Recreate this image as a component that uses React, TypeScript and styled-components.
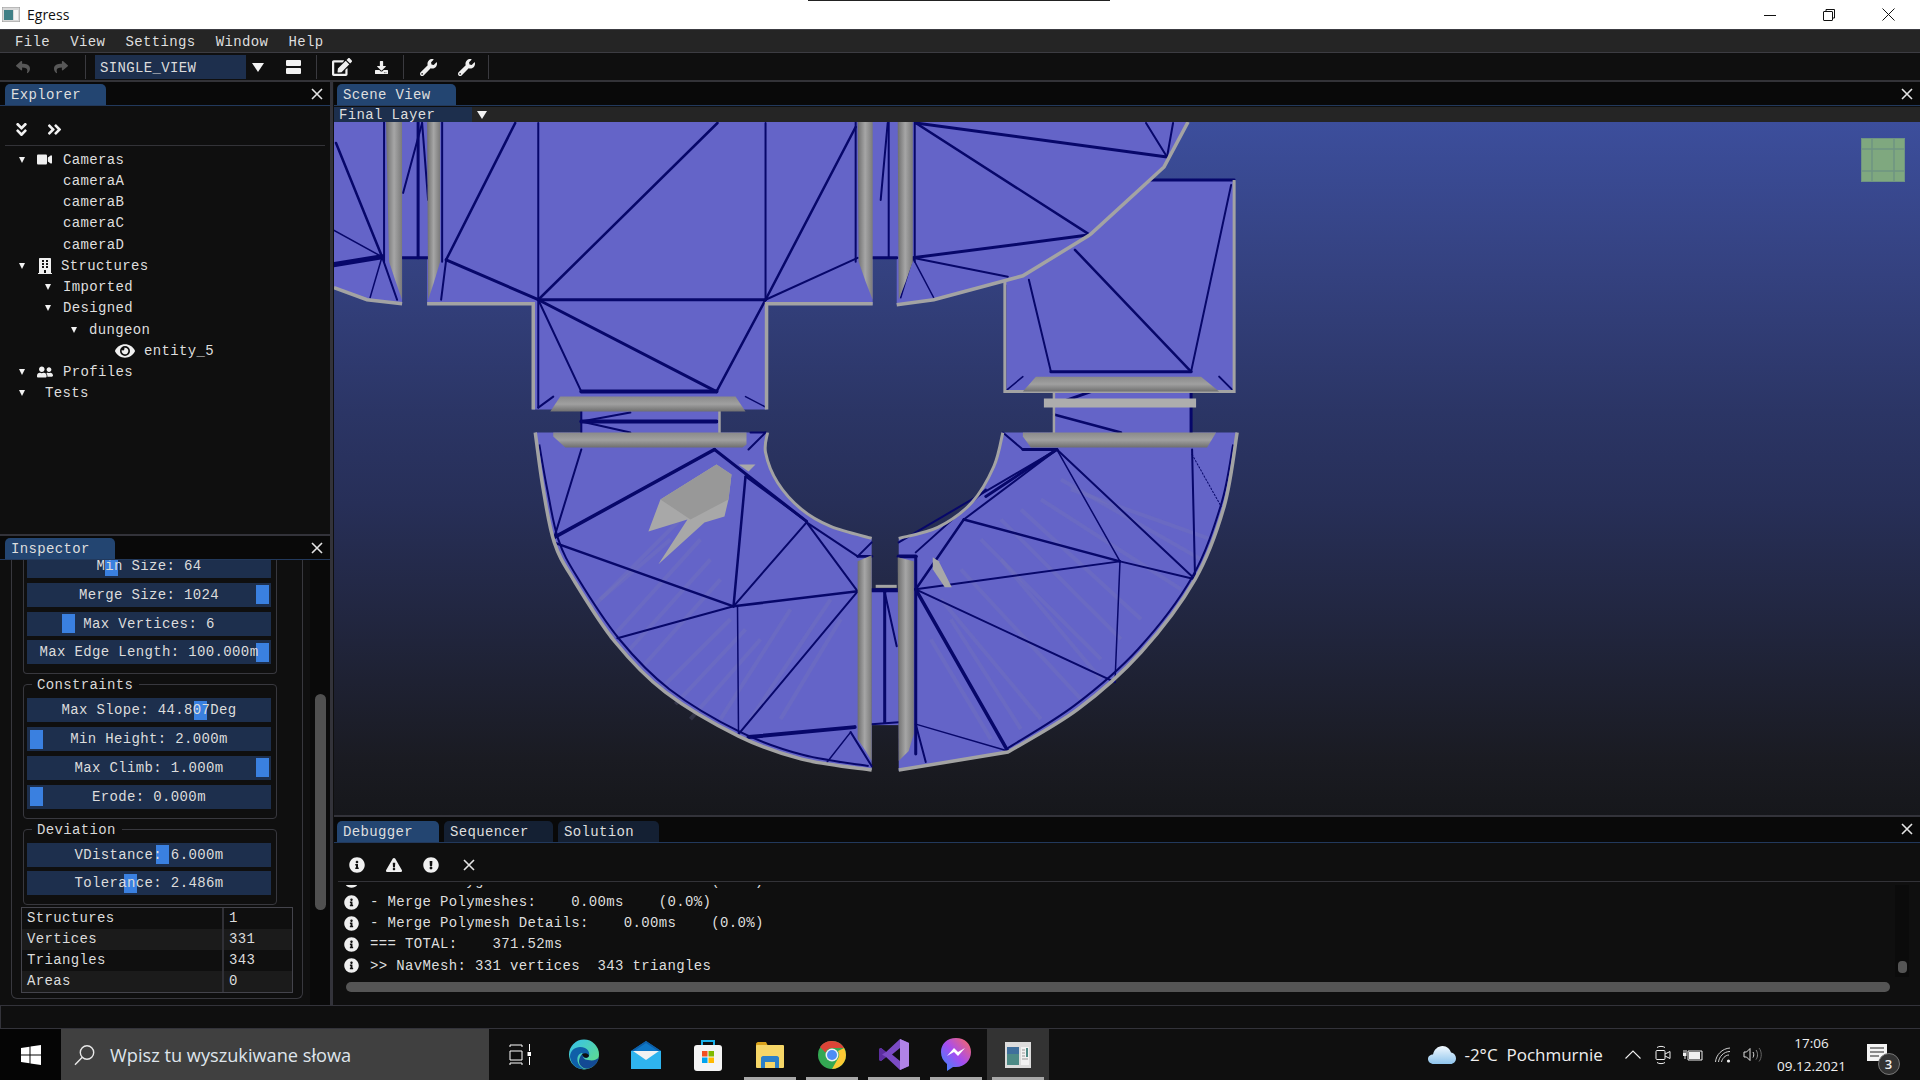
import React from "react";
import styled, { createGlobalStyle } from "styled-components";
import {
  FaVideo, FaBuilding, FaUserFriends, FaEye, FaAngleDoubleDown, FaAngleDoubleRight,
  FaReply, FaShare, FaEdit, FaDownload, FaWrench, FaInfoCircle,
  FaExclamationTriangle, FaExclamationCircle,
} from "react-icons/fa";

const MONO = `"Liberation Mono", "DejaVu Sans Mono", monospace`;
const SANS = `"Open Sans", "Noto Sans", sans-serif`;

const Global = createGlobalStyle`
  html, body { margin: 0; padding: 0; background: #0f0f0f; }
  * { box-sizing: border-box; }
  #root { width: 1920px; height: 1080px; overflow: hidden; }
`;

const Page = styled.div`
  position: relative; width: 1920px; height: 1080px; display: flex; flex-direction: column;
  font-family: ${MONO}; font-size: 14px; letter-spacing: 0.35px; color: #dedede; overflow: hidden;
  background: #0f0f0f;
`;
const TitleBar = styled.div`
  height: 29px; flex: none; background: #fff; display: flex; align-items: center; padding-left: 2px;
  font-family: ${SANS}; font-size: 14px; letter-spacing: 0; color: #111;
`;
const TitleText = styled.span` margin-left: 7px; `;
const TopMark = styled.div`
  position: absolute; left: 808px; top: 0; width: 302px; height: 1px; background: #222;
`;
const WindowButtons = styled.div` margin-left: auto; display: flex; height: 29px; `;
const WindowButton = styled.div`
  width: 58px; display: flex; align-items: center; justify-content: center; margin-right: 1px;
  &:last-child { margin-right: 3px; }
`;
const MenuBar = styled.div`
  height: 24px; flex: none; background: #252525; border-top: 1px solid #3c3c42; border-bottom: 1px solid #3c3c42;
  display: flex; align-items: center; gap: 20.25px; padding: 2px 0 0 15px;
`;
const ToolBar = styled.div`
  height: 29px; flex: none; background: #0f0f0f; border-bottom: 2px solid #333338; display: flex; align-items: center;
  color: #fff; padding-top: 1px;
`;
const ToolIcon = styled.div<{ $w: number; $dim?: boolean; $size?: number }>`
  width: ${(p) => p.$w}px; height: 22px; flex: none; display: flex; align-items: center; justify-content: center;
  color: ${(p) => (p.$dim ? "#585858" : "#f0f0f0")}; font-size: ${(p) => p.$size ?? 17}px;
`;
const ToolSep = styled.div<{ $ml?: number }>`
  width: 1px; height: 24px; background: #3a3a3f; flex: none; margin-left: ${(p) => p.$ml ?? 0}px;
`;
const Combo = styled.div`
  width: 151px; height: 24px; flex: none; margin-left: 9px; background: #1d2f4d; padding-left: 5px; line-height: 26px; color: #dcdcdc;
`;
const Arrow = styled.span<{ $size: number }>`
  display: inline-block; width: 0; height: 0; flex: none;
  border-left: ${(p) => p.$size}px solid transparent; border-right: ${(p) => p.$size}px solid transparent;
  border-top: ${(p) => p.$size * 1.6}px solid #f2f2f2;
`;
const Main = styled.div` flex: none; height: 923px; display: flex; `;
const LeftColumn = styled.div`
  width: 333px; flex: none; display: flex; flex-direction: column; border-right: 3px solid #33333a;
`;
const RightColumn = styled.div` flex: 1; min-width: 0; display: flex; flex-direction: column; padding-left: 1px; `;
const TabHeader = styled.div<{ $h?: number; $pl?: number }>`
  height: ${(p) => p.$h ?? 24}px; flex: none; background: #090909; border-bottom: 1px solid #22395c; display: flex; align-items: flex-end;
  padding-left: ${(p) => p.$pl ?? 5}px; gap: 5px; position: relative;
`;
const Tab = styled.div<{ $w: number; $active?: boolean }>`
  width: ${(p) => p.$w}px; height: 21px; border-radius: 5px 5px 0 0; padding-left: 6px; line-height: 22px;
  background: ${(p) => (p.$active ? "#234571" : "#142033")};
`;
const CloseSlot = styled.div`
  position: absolute; right: 7px; top: 6px; line-height: 0;
`;
const ExplorerPanel = styled.div` height: 454px; flex: none; display: flex; flex-direction: column; border-bottom: 2px solid #33333a; `;
const ExplorerTools = styled.div`
  height: 40px; flex: none; margin: 0 5px; border-bottom: 1px solid #333338; display: flex; align-items: center; gap: 16px;
  padding: 7px 0 0 8px; color: #f2f2f2; font-size: 17px;
`;
const Tree = styled.div` padding-top: 3px; `;
const TreeRow = styled.div<{ $indent: number }>`
  height: 21.25px; display: flex; align-items: center; padding-left: ${(p) => p.$indent}px; white-space: nowrap;
`;
const TreeArrowSlot = styled.div` width: 18px; display: flex; flex: none; `;
const TreeIcon = styled.div<{ $w: number; $size: number }>`
  width: ${(p) => p.$w}px; flex: none; display: flex; align-items: center; font-size: ${(p) => p.$size}px; color: #f0f0f0;
`;
const InspectorPanel = styled.div` flex: 1; display: flex; flex-direction: column; position: relative; min-height: 0; `;
const InspectorScroll = styled.div` flex: 1; overflow: hidden; padding-left: 11px; min-height: 0; `;
const OuterBox = styled.div`
  width: 292px; margin-top: -6px; border: 1px solid #38383e; border-top: 0; border-radius: 0 0 6px 6px; padding: 0 0 5px 9px;
`;
const Group = styled.div<{ $first?: boolean }>`
  position: relative; width: 254px; margin: ${(p) => (p.$first ? "0" : "10px")} 0 0 2px;
  padding: ${(p) => (p.$first ? "0" : "13px")} 5px 9px 3px; border: 1px solid #38383e; border-top-width: ${(p) => (p.$first ? 0 : 1)}px;
  border-radius: ${(p) => (p.$first ? "0 0 4px 4px" : "4px")}; display: flex; flex-direction: column; gap: 4.75px;
`;
const GroupTitle = styled.div`
  position: absolute; left: 8px; top: -8px; background: #0f0f0f; padding: 0 6px 0 5px; line-height: 16px; color: #d8d8d8;
`;
const Slider = styled.div`
  position: relative; height: 24px; background: #1d2f4d; display: flex; align-items: center; justify-content: center;
  white-space: pre; color: #dcdcdc;
`;
const Grab = styled.div<{ $left: number }>`
  position: absolute; left: ${(p) => p.$left}px; top: 2.5px; width: 13px; height: 19px; background: #3a80e0;
`;
const SliderLabel = styled.span` position: relative; `;
const Table = styled.div`
  width: 272px; margin-top: 2px; border: 1px solid #44444c; display: flex; flex-direction: column;
`;
const TableRow = styled.div<{ $odd?: boolean }>`
  height: 21px; display: flex; background: ${(p) => (p.$odd ? "#1b1b1b" : "#0f0f0f")}; line-height: 21px; color: #dcdcdc;
`;
const TableName = styled.div` width: 202px; padding-left: 5px; border-right: 2px solid #303036; `;
const TableValue = styled.div` padding-left: 5px; `;
const VScrollTrack = styled.div`
  position: absolute; right: 0; top: 24px; bottom: 0; width: 20px; background: #0a0a0a;
`;
const VScrollThumb = styled.div`
  position: absolute; left: 5px; top: 134px; width: 11px; height: 216px; border-radius: 6px; background: #505050;
`;
const ScenePanel = styled.div` height: 735px; flex: none; display: flex; flex-direction: column; border-bottom: 2px solid #33333a; `;
const LayerBar = styled.div`
  height: 15px; flex: none; margin-top: 1px; background: #252525; display: flex; align-items: center; line-height: 16px; overflow: hidden;
`;
const LayerCombo = styled.div` width: 138px; height: 15px; background: #1d2f4d; padding-left: 5px; margin-right: 5px; `;
const SceneViewport = styled.div`
  position: relative; flex: 1; min-height: 0; overflow: hidden;
  background: linear-gradient(180deg, #3c4e9c 0%, #34417f 22%, #2b3565 42%, #272f58 55%, #1a1b22 92%, #16171b 100%);
`;
const SceneSvg = styled.svg` display: block; width: 100%; height: 100%; `;
const Gizmo = styled.svg` position: absolute; right: 15px; top: 16px; `;
const DebugPanel = styled.div` flex: 1; display: flex; flex-direction: column; min-height: 0; position: relative; `;
const DebugTools = styled.div`
  height: 39px; flex: none; margin-left: 4px; border-bottom: 1px solid #333338; display: flex; align-items: center;
  padding: 5px 0 0 11px; gap: 21px; font-size: 16px; color: #f0f0f0;
  & > svg:last-child { margin-left: 3px; }
`;
const LogArea = styled.div` flex: 1; overflow: hidden; padding-left: 10px; margin-top: 3px; min-height: 0; position: relative; `;
const LogRow = styled.div<{ $top?: number }>`
  height: 21.2px; display: flex; align-items: center; white-space: pre; gap: 11px; color: #dedede;
  margin-top: ${(p) => p.$top ?? 0}px;
`;
const LogIcon = styled.div` font-size: 15px; line-height: 0; color: #efefef; flex: none; `;
const HScroll = styled.div`
  position: absolute; left: 12px; bottom: 13px; width: 1544px; height: 10px; border-radius: 5px; background: #555;
`;
const VScrollSmall = styled.div`
  position: absolute; right: 11px; top: 0; width: 14px; bottom: 28px; background: #0b0b0b;
  &::after {
    content: ""; position: absolute; left: 3px; bottom: 4px; width: 9px; height: 12px; border-radius: 4px; background: #555;
  }
`;
const StatusBar = styled.div`
  height: 24px; flex: none; background: #0f0f0f; border-top: 1px solid #33333a; border-bottom: 1px solid #33333a; border-left: 1px solid #33333a;
`;
const TaskBar = styled.div`
  height: 51px; flex: none; background: #0f0f0f; display: flex; align-items: stretch;
  font-family: ${SANS}; letter-spacing: 0; color: #f0f0f0;
`;
const StartButton = styled.div` width: 61px; background: #050505; display: flex; align-items: center; justify-content: center; `;
const SearchBox = styled.div`
  width: 428px; background: #404040; display: flex; align-items: center; padding-left: 13px; gap: 14px; font-size: 18.2px; color: #dfe5ec;
`;
const TaskItem = styled.div<{ $active?: boolean; $running?: boolean; $mr?: number }>`
  position: relative; width: 62px; display: flex; align-items: center; justify-content: center;
  margin-right: ${(p) => p.$mr ?? 0}px;
  background: ${(p) => (p.$active ? "#333" : "transparent")};
  &::after {
    content: ""; display: ${(p) => (p.$running ? "block" : "none")}; position: absolute; left: 5px; right: 5px; bottom: 0; height: 3px; background: #a8a8a8;
  }
`;
const Tray = styled.div` margin-left: auto; padding-right: 7.5px; display: flex; align-items: center; position: relative; `;
const TrayIcon = styled.div<{ $w: number }>` width: ${(p) => p.$w}px; display: flex; justify-content: center; align-items: center; `;
const Weather = styled.div` font-size: 17px; width: 158px; white-space: pre; `;
const Clock = styled.div`
  width: 88px; display: flex; flex-direction: column; align-items: center; font-size: 13.5px; line-height: 23px; margin-left: 0.5px;
`;
const Notify = styled.div` position: relative; width: 46px; height: 51px; margin-left: 11px; `;
const NotifyGlyph = styled.svg` position: absolute; left: 0; top: 15px; `;
const Badge = styled.div`
  position: absolute; left: 11px; top: 24px; width: 22px; height: 22px; border-radius: 50%; background: #333; border: 1px solid #777;
  font-size: 13px; font-weight: 600; text-align: center; line-height: 20px;
`;

const NAVY = "#07076a";
const PURPLE = "#6464c8";
const WALL = "#a3a3a3";

const smooth = (pts: number[][]) => {
  let d = `M${pts[0][0]} ${pts[0][1]}`;
  for (let i = 0; i < pts.length - 1; i++) {
    const p0 = pts[Math.max(i - 1, 0)], p1 = pts[i], p2 = pts[i + 1], p3 = pts[Math.min(i + 2, pts.length - 1)];
    d += `C${p1[0] + (p2[0] - p0[0]) / 6} ${p1[1] + (p2[1] - p0[1]) / 6} ${p2[0] - (p3[0] - p1[0]) / 6} ${p2[1] - (p3[1] - p1[1]) / 6} ${p2[0]} ${p2[1]}`;
  }
  return d;
};
const leftOuter = [[535,433],[543,490],[554,543],[573,580],[615,643],[665,693],[738,737],[801,760],[871,771]];
const leftInner = [[871,539],[830,527],[801,510],[777,483],[765,453],[767,433]];
const rightOuter = [[1007,753],[1077,710],[1140,653],[1194,580],[1223,507],[1236,433]];
const rightInner = [[1002,433],[993,467],[971,503],[937,528],[898,539]];
const joined = (a: number[][], b: number[][]) => `${smooth(a)}L${smooth(b).slice(1)}Z`;
const rightCurves = smooth(rightOuter).slice(smooth(rightOuter).indexOf("C"));

const meshLines: number[][] = [
  [538,300,765,300,3],[538,123,538,300,2],[765,123,765,300,2],[538,300,717,123,2.5],[765,300,855,127,2.5],
  [765,300,857,258,2],[538,300,446,260,3],[446,260,515,123,2.5],[336,143,382,257,2.5],[333,230,382,257,1.5],
  [333,265,382,257,5],[382,257,370,298,1.5],[382,257,397,300,2],[418,122,418,258,3],[403,193,422,123,2],[422,123,428,200,2],
  [398,258,432,258,3],[446,260,441,300,2],[888,122,888,258,2],[880,200,887,123,2],[872,258,896,258,3],
  [384,122,384,262,2],[442,122,442,262,2],[855,122,855,262,2],[914,122,914,262,2],
  [915,123,1089,235,2.5],[912,258,1089,235,3],[912,258,1007,277,2],[912,258,933,298,1.5],[912,258,900,298,1.5],
  [915,123,1166,157,3],[1145,123,1166,157,2],[1172,123,1166,157,2],
  [538,300,581,392,2],[538,300,716,392,3],[765,300,716,392,2.5],[581,392,716,392,4],[538,300,538,408,2],[538,408,553,397,2],[766,408,745,397,1.5],
  [581,422,716,422,4],[581,422,630,413,2],[581,422,630,433,2],[581,410,581,433,2],
  [1074,250,1190,372,2.5],[1028,280,1050,372,2],[1050,372,1190,372,3],[1190,372,1230,185,2],[1150,180,1233,180,3],
  [1004,392,1022,377,1.5],[1233,392,1218,377,2],[1053,392,1053,433,2],[1190,392,1190,433,3],[1053,415,1120,433,2.5],[1053,405,1090,392,3],
  [714,450,554,538,3.5],[554,538,581,450,2],[556,544,733,607,2.5],[733,607,857,592,2.5],[617,639,733,607,2],[733,607,745,477,2.5],
  [714,450,806,522,3],[745,477,806,522,2],[733,607,806,523,2],[806,523,857,592,2],[738,735,737,607,1.5],[738,735,857,592,2],
  [748,738,854,728,4],[850,733,825,765,1.5],[850,733,871,767,2],[857,557,871,557,3],[857,557,806,523,2],[871,543,857,557,2],
  [750,433,765,433,2],[748,450,765,433,2],
  [884,593,884,723,3],[884,593,896,647,2],[871,591,898,591,4],[871,725,898,723,2],
  [1056,450,1119,562,1.5],[1056,450,1194,580,2],[963,520,1119,562,2.5],[1119,562,1194,580,2],[915,590,1119,562,2],[1119,562,1114,683,1.5],
  [915,590,1114,683,2],[915,590,1007,752,3.5],[915,725,1007,752,1.5],[915,725,925,763,2],[963,520,915,590,2.5],[1191,450,1194,580,2],
  [1056,450,985,497,3],[1056,450,963,520,2],[898,543,1056,450,2],[915,553,985,490,2],[898,557,915,557,4],[915,557,915,755,3],
  [1002,433,1022,450,2],[1022,450,1056,450,3],
];

const streaks: number[][] = [
  [590,610,680,520],[610,640,700,540],[640,670,720,580],[660,690,730,620],[690,720,760,640],[720,720,790,610],[750,720,830,600],[780,720,840,620],
  [600,600,670,540],[625,655,710,560],[675,705,745,630],
  [1000,520,1120,640],[1020,510,1140,620],[1040,500,1180,590],[1060,480,1200,560],[960,570,1080,700],[940,600,1040,720],[930,640,990,740],[980,540,1100,660],
  [1070,490,1210,540],[1000,560,1100,680],[950,620,1020,730],
];

const Mesh = () => (
  <SceneSvg viewBox="334 122 1584 694" preserveAspectRatio="none">
    <defs>
      <linearGradient id="pillar" x1="0" x2="1" y1="0" y2="0">
        <stop offset="0" stopColor="#6e6e6e" /><stop offset="0.5" stopColor="#a6a6a6" /><stop offset="1" stopColor="#7a7a7a" />
      </linearGradient>
      <linearGradient id="door" x1="0" x2="0" y1="0" y2="1">
        <stop offset="0" stopColor="#8a8a8a" /><stop offset="0.5" stopColor="#a0a0a0" /><stop offset="1" stopColor="#6f6f6f" />
      </linearGradient>
    </defs>
    <g fill={PURPLE}>
      <polygon points="334,122 1187,122 1163,167 1089,235 1022,276 933,300 896,305 896,258 872,258 872,305 766,305 766,410 532,410 532,305 427,305 427,258 402,258 402,305 367,300 334,288" />
      <polygon points="1004,282 1022,276 1089,235 1150,180 1233,180 1233,392 1004,392" />
      <rect x="581" y="410" width="138" height="24" />
      <rect x="1053" y="392" width="137" height="42" />
      <path d={joined(leftOuter, leftInner)} />
      <path d={`${smooth(rightInner)}L898 772L1007 753${rightCurves}Z`} />
      <rect x="871" y="590" width="27" height="136" />
    </g>
    <g stroke="#8484b0" strokeOpacity="0.2" strokeWidth="4" fill="none">
      {streaks.map((s, i) => <line key={i} x1={s[0]} y1={s[1]} x2={s[2]} y2={s[3]} />)}
    </g>
    <g stroke={NAVY} strokeLinecap="round">
      {meshLines.map((l, i) => <line key={i} x1={l[0]} y1={l[1]} x2={l[2]} y2={l[3]} strokeWidth={l[4]} />)}
      <line x1="1191" y1="455" x2="1220" y2="507" strokeWidth="1" strokeDasharray="1.5 2" />
    </g>
    <g fill="none" stroke={NAVY} strokeWidth="2" strokeLinejoin="round">
      <path d={smooth([[539,445],[547,490],[558,540],[577,578],[619,640],[669,690],[740,733],[803,756],[868,767]])} />
      <path d={smooth([[1232,445],[1220,505],[1191,578],[1137,650],[1074,706],[1007,749]])} />
      <polyline points="1005,285 1005,392" strokeWidth="1" />
    </g>
    <g fill="none" stroke={WALL} strokeWidth="3.5" strokeLinejoin="miter">
      <polyline points="334,288 367,300 402,304" />
      <polyline points="427,304 533,304 533,410" />
      <polyline points="766,410 766,304 872,304" />
      <polyline points="896,305 933,300 1022,276 1089,235 1163,167 1187,122" />
      <polyline points="1233,180 1233,392 1004,392 1004,282" strokeWidth="3" />
      <path d={smooth(leftOuter)} />
      <path d={`M898 771L1007 753${rightCurves}`} />
      <path d={smooth(leftInner)} strokeWidth="3" />
      <path d={smooth(rightInner)} strokeWidth="3" />
      <line x1="1053" y1="392" x2="1053" y2="434" strokeWidth="2.5" />
      <line x1="719" y1="410" x2="719" y2="434" strokeWidth="2.5" />
      <line x1="875" y1="587" x2="896" y2="587" strokeWidth="3" />
    </g>
    <g fill="url(#pillar)">
      <path d="M386 122H402V300L395 280L389 262Z" />
      <path d="M427 122H440V262L434 282L428 300Z" />
      <path d="M857 122H872V300L865 282L858 262Z" />
      <path d="M897 122H912V262L905 282L898 300Z" />
      <path d="M857 562L871 556V762L865 752L857 740Z" />
      <path d="M897 558L913 562V735L908 752L898 762Z" />
    </g>
    <g fill="url(#door)">
      <polygon points="560,397 735,397 745,412 550,412" />
      <polygon points="553,433 746,433 746,445 742,448 565,448 553,437" />
      <polygon points="1035,377 1200,377 1218,392 1022,392" />
      <polygon points="1022,433 1215,433 1206,448 1030,448 1022,437" />
    </g>
    <polygon points="1043,399 1195,399 1195,408 1043,408" fill="#adadad" />
    <g fill="#a8a8a8">
      <polygon points="716,465 731,475 728,500 724,517 704,523 658,565 687,520 648,532 660,500" />
      <polygon points="932,558 938,562 951,588 944,588 932,570" />
      <polygon points="738,465 755,465 748,472" />
    </g>
    <polygon points="660,500 716,465 731,475 728,500 690,520" fill="#989898" />
  </SceneSvg>
);

const sliderGroups = [
  { title: "", rows: [["Min Size: 64", 78], ["Merge Size: 1024", 229], ["Max Vertices: 6", 35], ["Max Edge Length: 100.000m", 229]] },
  { title: "Constraints", rows: [["Max Slope: 44.807Deg", 166.7], ["Min Height: 2.000m", 3], ["Max Climb: 1.000m", 229], ["Erode: 0.000m", 3]] },
  { title: "Deviation", rows: [["VDistance: 6.000m", 129], ["Tolerance: 2.486m", 96.7]] },
] as { title: string; rows: [string, number][] }[];

const tree = [
  { indent: 19, label: "Cameras", icon: "camera", arrow: true },
  { indent: 63, label: "cameraA" }, { indent: 63, label: "cameraB" }, { indent: 63, label: "cameraC" }, { indent: 63, label: "cameraD" },
  { indent: 19, label: "Structures", icon: "building", arrow: true },
  { indent: 45, label: "Imported", arrow: true }, { indent: 45, label: "Designed", arrow: true },
  { indent: 71, label: "dungeon", arrow: true },
  { indent: 115, label: "entity_5", icon: "eye" },
  { indent: 19, label: "Profiles", icon: "users", arrow: true },
  { indent: 19, label: "Tests", icon: "blank", arrow: true },
];

const treeIcon = (name?: string) => {
  if (name === "camera") return <TreeIcon $w={26} $size={15}><FaVideo /></TreeIcon>;
  if (name === "building") return <TreeIcon $w={24} $size={16}><FaBuilding /></TreeIcon>;
  if (name === "users") return <TreeIcon $w={26} $size={16}><FaUserFriends /></TreeIcon>;
  if (name === "eye") return <TreeIcon $w={29} $size={20}><FaEye /></TreeIcon>;
  if (name === "blank") return <TreeIcon $w={8} $size={1} />;
  return null;
};

const logs = [
  "- Merge Polymeshes:    0.00ms    (0.0%)",
  "- Merge Polymesh Details:    0.00ms    (0.0%)",
  "=== TOTAL:    371.52ms",
  ">> NavMesh: 331 vertices  343 triangles",
];

const CloseGlyph = () => (
  <svg width="12" height="12" viewBox="0 0 12 12"><path d="M1 1L11 11M11 1L1 11" stroke="#e4e4e4" strokeWidth="1.6" /></svg>
);

const Edge = () => (
  <svg width="30" height="31" viewBox="0 0 30 31">
    <defs>
      <linearGradient id="eg1" x1="0" y1="0" x2="1" y2="1"><stop offset="0" stopColor="#35c1f1" /><stop offset="1" stopColor="#66e07c" /></linearGradient>
    </defs>
    <circle cx="15" cy="15.5" r="15" fill="url(#eg1)" />
    <path d="M1 18C1 9 10 6 16 9C22 12 21 19 17 19C14 19 13 17 14 14C8 14 6 22 12 28C14 30 17 31 21 29C14 32 3 30 1 18Z" fill="#0f5fa8" />
    <path d="M30 18C29 23 26 27 21 29C16 31 11 28 10 23C10 18 13 15 14 14C13 18 15 21 19 21C24 22 28 21 30 18Z" fill="#134a94" />
    <path d="M13 15C17 13 20 15 20 17C18 20 14 19 13 15Z" fill="#0f0f0f" />
  </svg>
);
const Mail = () => (
  <svg width="30" height="30" viewBox="0 0 30 30">
    <path d="M0 11L15 1L30 11V29H0Z" fill="#0f78c8" />
    <path d="M0 11H30V29H0Z" fill="#2fb4ee" />
    <path d="M2 11H28L15 20Z" fill="#f2f2f2" />
    <path d="M0 11L15 1L30 11H27L15 3L3 11Z" fill="#0c5ea8" />
  </svg>
);
const Store = () => (
  <svg width="28" height="32" viewBox="0 0 28 32">
    <path d="M8 8V2H20V8" fill="none" stroke="#1ab0e8" strokeWidth="2" />
    <rect x="0" y="6" width="28" height="26" rx="3" fill="#f4f4f4" />
    <rect x="8" y="12" width="5.5" height="5.5" fill="#f25022" /><rect x="14.5" y="12" width="5.5" height="5.5" fill="#7fba00" />
    <rect x="8" y="18.5" width="5.5" height="5.5" fill="#00a4ef" /><rect x="14.5" y="18.5" width="5.5" height="5.5" fill="#ffb900" />
  </svg>
);
const Folder = () => (
  <svg width="28" height="26" viewBox="0 0 28 26">
    <path d="M0 2C0 1 1 0 2 0H10L12 4H0Z" fill="#d9a21c" />
    <rect x="0" y="3" width="28" height="23" rx="1" fill="#f6d667" />
    <path d="M5 26V16C5 15 6 14 7 14H21C22 14 23 15 23 16V26H19V20H9V26Z" fill="#2b80c9" />
  </svg>
);
const Chrome = () => (
  <svg width="28" height="28" viewBox="0 0 28 28">
    <circle cx="14" cy="14" r="14" fill="#34a853" />
    <path d="M14 0A14 14 0 0 1 26.1 7H14A7 7 0 0 0 7.5 11.5L2 6A14 14 0 0 1 14 0Z" fill="#db4437" />
    <path d="M26.1 7A14 14 0 0 1 14 28L20 17.5A7 7 0 0 0 20 10Z" fill="#fcc934" />
    <circle cx="14" cy="14" r="6.5" fill="#f1f1f1" /><circle cx="14" cy="14" r="5" fill="#4e8df5" />
  </svg>
);
const VS = () => (
  <svg width="30" height="31" viewBox="0 0 30 31">
    <path d="M21 0L30 4V27L21 31L7 18L2 22L0 21V10L2 9L7 13ZM21 9L13 15.5L21 22Z" fill="#7b4bc4" />
    <path d="M21 0L30 4V27L21 31Z" fill="#b083e6" />
    <path d="M0 10L2 9L7 13L3 15.5L7 18L2 22L0 21Z" fill="#5c2d9f" />
  </svg>
);
const Messenger = () => (
  <svg width="30" height="34" viewBox="0 0 30 34">
    <defs>
      <linearGradient id="ms1" x1="0" y1="1" x2="1" y2="0"><stop offset="0" stopColor="#2e8cff" /><stop offset="0.5" stopColor="#a64cf0" /><stop offset="1" stopColor="#ff6a5c" /></linearGradient>
    </defs>
    <path d="M15 0C6 0 0 6 0 14C0 19 2 23 6 26V33L12 29C13 29 14 29 15 29C24 29 30 22 30 14C30 6 24 0 15 0Z" fill="url(#ms1)" />
    <path d="M6 18L13 10L17 14L24 10L17 18L13 14Z" fill="#fff" />
  </svg>
);
const AppIcon = () => (
  <svg width="26" height="26" viewBox="0 0 26 26">
    <rect width="26" height="26" fill="#dcdcdc" />
    <rect x="2" y="5" width="12" height="18" fill="#4d8a86" />
    <rect x="2" y="5" width="12" height="7" fill="#3f6f9c" />
    <rect x="16" y="5" width="8" height="18" fill="#f2f2f2" />
    <rect x="21" y="6" width="2" height="9" fill="#4d8a86" />
    <path d="M17 8H20M17 11H20M17 14H20M17 17H23" stroke="#999" />
  </svg>
);

export default function App() {
  return (
    <Page>
      <Global />
      <TopMark />
      <TitleBar>
        <svg width="18" height="15" viewBox="0 0 18 15">
          <rect width="18" height="15" fill="#d8d8d8" stroke="#999" />
          <rect x="2" y="3" width="9" height="10" fill="#3f7f86" />
          <rect x="12" y="3" width="4" height="10" fill="#f4f4f4" />
        </svg>
        <TitleText>Egress</TitleText>
        <WindowButtons>
          <WindowButton><svg width="12" height="12" viewBox="0 0 12 12"><path d="M0 6.5H12" stroke="#111" /></svg></WindowButton>
          <WindowButton><svg width="12" height="12" viewBox="0 0 12 12" fill="none" stroke="#111"><rect x="0.5" y="2.5" width="9" height="9" rx="0.5" /><path d="M3 2.5V0.5H11.5V9H9.5" /></svg></WindowButton>
          <WindowButton><svg width="13" height="13" viewBox="0 0 13 13"><path d="M0.5 0.5L12.5 12.5M12.5 0.5L0.5 12.5" stroke="#111" /></svg></WindowButton>
        </WindowButtons>
      </TitleBar>
      <MenuBar>
        <span>File</span><span>View</span><span>Settings</span><span>Window</span><span>Help</span>
      </MenuBar>
      <ToolBar>
        <ToolIcon $w={46} $dim $size={14}><FaReply /></ToolIcon>
        <ToolIcon $w={30} $dim $size={14}><FaShare /></ToolIcon>
        <ToolSep $ml={9} />
        <Combo>SINGLE_VIEW</Combo>
        <ToolIcon $w={24}><Arrow $size={6} /></ToolIcon>
        <ToolIcon $w={46}>
          <svg width="15" height="14" viewBox="0 0 15 14" fill="#f2f2f2"><rect width="15" height="6" rx="1" /><rect y="8" width="15" height="6" rx="1" /></svg>
        </ToolIcon>
        <ToolSep />
        <ToolIcon $w={50} $size={20}><FaEdit /></ToolIcon>
        <ToolIcon $w={28} $size={13}><FaDownload /></ToolIcon>
        <ToolSep $ml={8} />
        <ToolIcon $w={48}><FaWrench /></ToolIcon>
        <ToolIcon $w={28}><FaWrench /></ToolIcon>
        <ToolSep $ml={8} />
      </ToolBar>
      <Main>
        <LeftColumn>
          <ExplorerPanel>
            <TabHeader>
              <Tab $w={101} $active>Explorer</Tab>
              <CloseSlot><CloseGlyph /></CloseSlot>
            </TabHeader>
            <ExplorerTools><FaAngleDoubleDown /><FaAngleDoubleRight /></ExplorerTools>
            <Tree>
              {tree.map((t) => (
                <TreeRow key={t.label} $indent={t.indent}>
                  {t.arrow && <TreeArrowSlot><Arrow $size={3.75} /></TreeArrowSlot>}
                  {treeIcon(t.icon)}
                  <span>{t.label}</span>
                </TreeRow>
              ))}
            </Tree>
          </ExplorerPanel>
          <InspectorPanel>
            <TabHeader>
              <Tab $w={110} $active>Inspector</Tab>
              <CloseSlot><CloseGlyph /></CloseSlot>
            </TabHeader>
            <InspectorScroll>
              <OuterBox>
                {sliderGroups.map((g, i) => (
                  <Group key={i} $first={i === 0}>
                    {g.title && <GroupTitle>{g.title}</GroupTitle>}
                    {g.rows.map(([label, left]) => (
                      <Slider key={label}>
                        <Grab $left={left} />
                        <SliderLabel>{label}</SliderLabel>
                      </Slider>
                    ))}
                  </Group>
                ))}
                <Table>
                  {[["Structures", "1"], ["Vertices", "331"], ["Triangles", "343"], ["Areas", "0"]].map(([a, b], i) => (
                    <TableRow key={a} $odd={i % 2 === 1}>
                      <TableName>{a}</TableName>
                      <TableValue>{b}</TableValue>
                    </TableRow>
                  ))}
                </Table>
              </OuterBox>
            </InspectorScroll>
            <VScrollTrack><VScrollThumb /></VScrollTrack>
          </InspectorPanel>
        </LeftColumn>
        <RightColumn>
          <ScenePanel>
            <TabHeader $pl={3}>
              <Tab $w={119} $active>Scene View</Tab>
              <CloseSlot><CloseGlyph /></CloseSlot>
            </TabHeader>
            <LayerBar>
              <LayerCombo>Final Layer</LayerCombo>
              <Arrow $size={5} />
            </LayerBar>
            <SceneViewport>
              <Mesh />
              <Gizmo width="44" height="44" viewBox="0 0 44 44">
                <rect width="44" height="44" fill="#7fa87f" />
                <path d="M11 0V44M33 0V44M0 11H44M0 33H44" stroke="#6f9483" strokeWidth="1.5" />
                <path d="M0 43.5H44" stroke="#a77b84" />
                <rect x="0.5" y="0.5" width="43" height="43" fill="none" stroke="#6f9483" />
              </Gizmo>
            </SceneViewport>
          </ScenePanel>
          <DebugPanel>
            <TabHeader $h={26} $pl={3}>
              <Tab $w={102} $active>Debugger</Tab>
              <Tab $w={109}>Sequencer</Tab>
              <Tab $w={101}>Solution</Tab>
              <CloseSlot><CloseGlyph /></CloseSlot>
            </TabHeader>
            <DebugTools>
              <FaInfoCircle /><FaExclamationTriangle /><FaExclamationCircle />
              <CloseGlyph />
            </DebugTools>
            <LogArea>
              <LogRow $top={-14.7}><LogIcon><FaInfoCircle /></LogIcon><span>{"- Build Polygon Mesh:       0.00ms     (0.0%)"}</span></LogRow>
              {logs.map((l) => (
                <LogRow key={l}><LogIcon><FaInfoCircle /></LogIcon><span>{l}</span></LogRow>
              ))}
              <HScroll />
              <VScrollSmall />
            </LogArea>
          </DebugPanel>
        </RightColumn>
      </Main>
      <StatusBar />
      <TaskBar>
        <StartButton>
          <svg width="20" height="20" viewBox="0 0 20 20" fill="#fff">
            <path d="M0 3L8.5 1.8V9.5H0ZM9.5 1.6L20 0V9.5H9.5ZM0 10.5H8.5V18.2L0 17ZM9.5 10.5H20V20L9.5 18.4Z" />
          </svg>
        </StartButton>
        <SearchBox>
          <svg width="22" height="22" viewBox="0 0 22 22" fill="none" stroke="#e8e8e8" strokeWidth="1.4">
            <circle cx="13" cy="8.5" r="6.7" /><path d="M8.3 13.2L1 20.8" />
          </svg>
          <span>Wpisz tu wyszukiwane słowa</span>
        </SearchBox>
        <TaskItem $mr={2}>
          <svg width="22" height="22" viewBox="0 0 22 22" fill="none" stroke="#fff" strokeWidth="1">
            <path d="M1 3V1H13V3M1 7H13V16H1ZM1 21V19H13V21M20.5 0V7M20.5 13V21" />
            <rect x="18.5" y="8" width="4" height="4" fill="#fff" stroke="none" />
          </svg>
        </TaskItem>
        <TaskItem><Edge /></TaskItem>
        <TaskItem><Mail /></TaskItem>
        <TaskItem><Store /></TaskItem>
        <TaskItem $running><Folder /></TaskItem>
        <TaskItem $running><Chrome /></TaskItem>
        <TaskItem $running><VS /></TaskItem>
        <TaskItem $running><Messenger /></TaskItem>
        <TaskItem $running $active><AppIcon /></TaskItem>
        <Tray>
          <TrayIcon $w={36}>
            <svg width="28" height="18" viewBox="0 0 28 18">
              <defs>
                <linearGradient id="cld" x1="0" x2="0" y1="0" y2="1"><stop offset="0" stopColor="#f2f9ff" /><stop offset="1" stopColor="#8ec4ec" /></linearGradient>
              </defs>
              <path d="M6 18C2 18 0 15.5 0 13C0 10 2.5 8.5 5 8.5C6 3.5 10 0 14.5 0C19 0 22 3 23 6.5C26 7 28 9.5 28 12.5C28 15.5 25.5 18 22.5 18Z" fill="url(#cld)" />
            </svg>
          </TrayIcon>
          <Weather>{" -2°C  Pochmurnie"}</Weather>
          <TrayIcon $w={30}>
            <svg width="16" height="9" viewBox="0 0 16 9" fill="none" stroke="#f0f0f0" strokeWidth="1.1"><path d="M0.5 8.5L8 1L15.5 8.5" /></svg>
          </TrayIcon>
          <TrayIcon $w={30}>
            <svg width="16" height="20" viewBox="0 0 16 20" fill="none" stroke="#f0f0f0"><rect x="1" y="5.5" width="9" height="9" rx="1" /><path d="M10 9L15 6.5V13.5L10 11M2 2.5C4 1 8 1 10 2.5M2 17.5C4 19 8 19 10 17.5" /></svg>
          </TrayIcon>
          <TrayIcon $w={30}>
            <svg width="20" height="12" viewBox="0 0 20 12" fill="#f0f0f0"><path d="M5 2H19V11H5Z" fill="none" stroke="#f0f0f0" /><rect x="6" y="3" width="11" height="7" /><rect x="0" y="4" width="3.5" height="3" /><path d="M1 1V4M3 1V4M2 7V10" stroke="#f0f0f0" /></svg>
          </TrayIcon>
          <TrayIcon $w={30}>
            <svg width="16" height="16" viewBox="0 0 16 16" fill="none" stroke="#cfcfcf"><path d="M0.5 15C1 8 7 1.5 15 1M3.5 15C4 10 8.5 4.5 15 4.5M6.5 15C7 12 10 8 14 8" /><circle cx="13.5" cy="14" r="1.6" fill="#f0f0f0" stroke="none" /></svg>
          </TrayIcon>
          <TrayIcon $w={29}>
            <svg width="20" height="16" viewBox="0 0 20 16" fill="none" stroke="#e0e0e0"><path d="M1 5H3.5L7 1.5V13.5L3.5 10H1Z" /><path d="M10 5C11 6.5 11 9 10 10.5" /><path d="M13 3C15 5.5 15 10 13 12.5" stroke="#888" /><path d="M16 1C19 4.5 19 11 16 14.5" stroke="#666" /></svg>
          </TrayIcon>
          <Clock><span>17:06</span><span>09.12.2021</span></Clock>
          <Notify>
            <NotifyGlyph width="20" height="18" viewBox="0 0 20 18">
              <rect width="20" height="17" fill="#f4f4f4" />
              <path d="M3 4H17M3 8H17M3 12H12" stroke="#222" />
            </NotifyGlyph>
            <Badge>3</Badge>
          </Notify>
        </Tray>
      </TaskBar>
    </Page>
  );
}
